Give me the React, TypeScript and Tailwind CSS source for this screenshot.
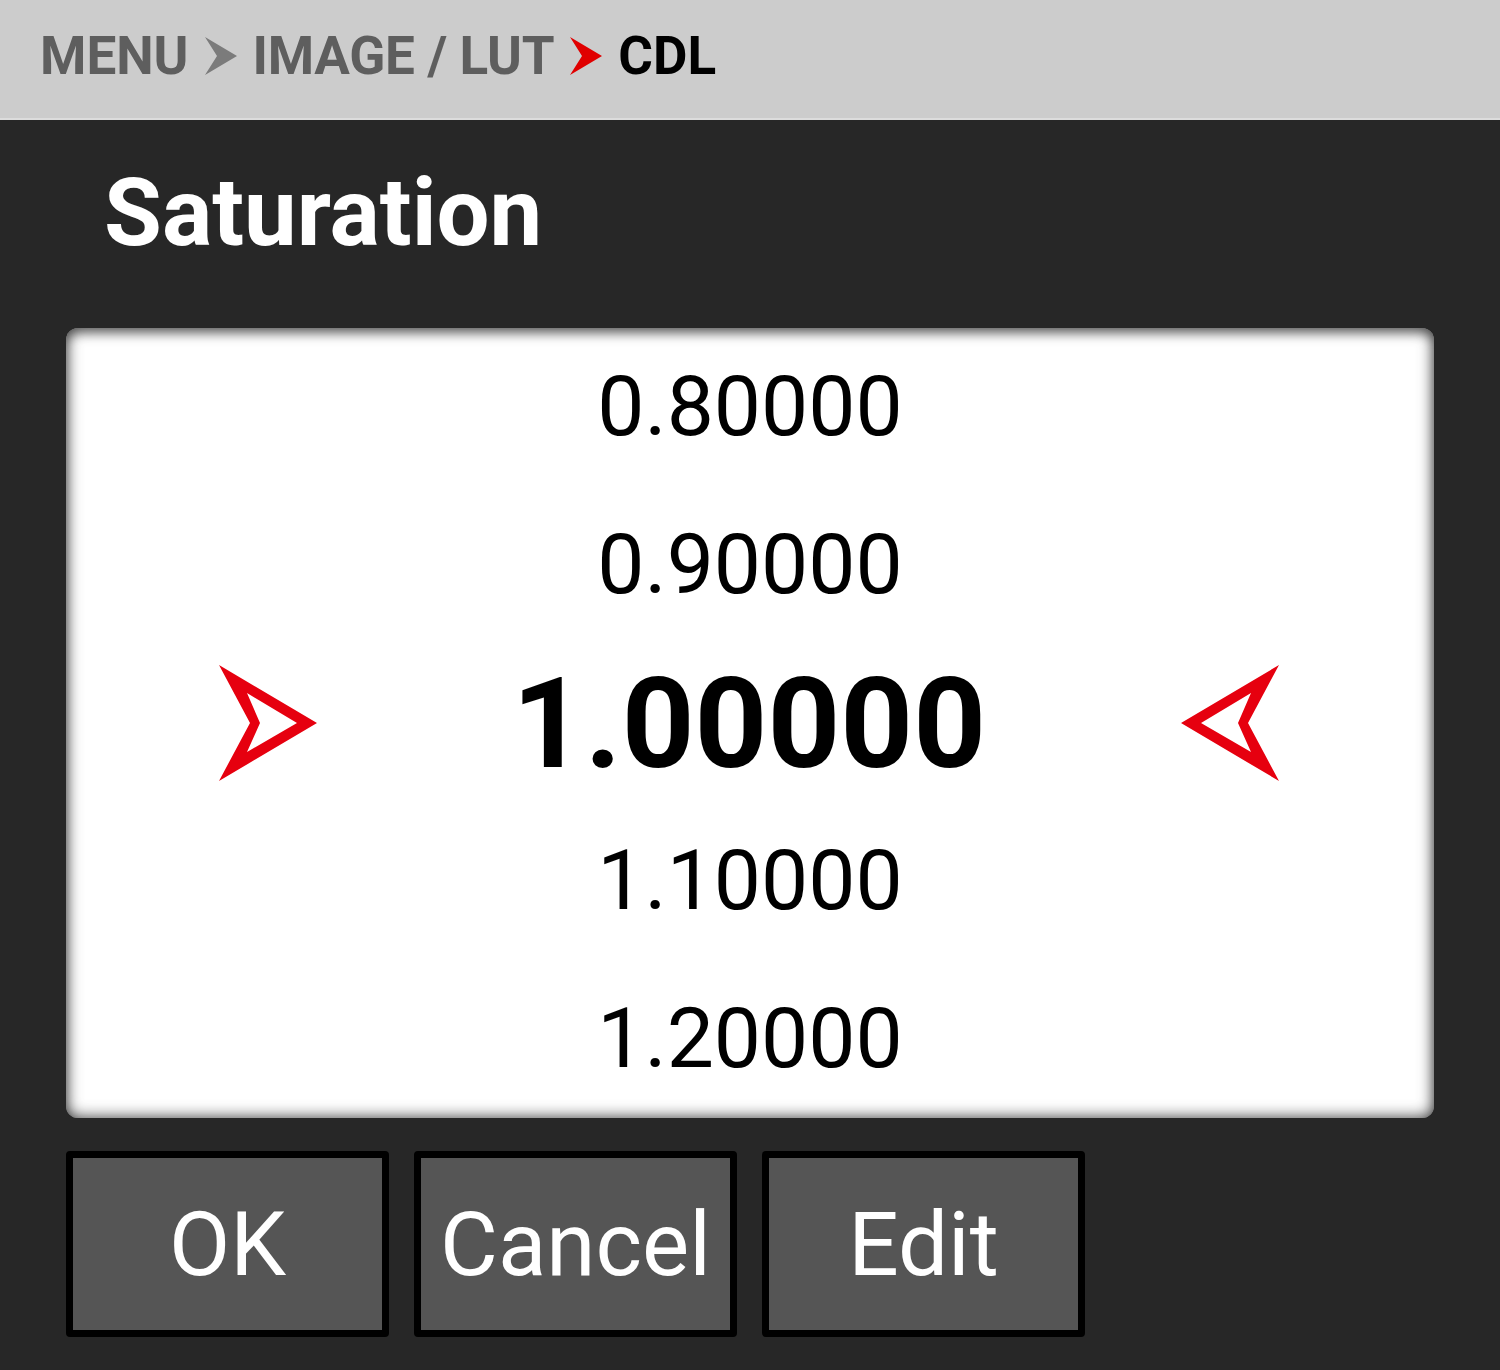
import React from 'react';

const Crumb = ({ color }: { color: string }) => (
    <svg width="32" height="38" viewBox="0 0 32 38" className="shrink-0">
        <path d="M0 0 L32 19 L0 38 L12 19 Z" fill={color} />
    </svg>
);

// hollow red pointer used on both sides of the selected value
const Pointer = ({ flip }: { flip?: boolean }) => (
    <svg width="100" height="118" viewBox="0 0 100 118" className={flip ? '-scale-x-100' : ''}>
        <path
            fillRule="evenodd"
            fill="#e6000f"
            d="M1 1 L99 59 L1 117 L32 59 Z M29 29 L42 59 L29 88 L79 59 Z"
        />
    </svg>
);

const values = ['0.80000', '0.90000', '1.00000', '1.10000', '1.20000'];

const App = () => {
    return (
        <div className="w-[1500px] h-[1370px] bg-[#272727] font-['Roboto',_'Liberation_Sans',_sans-serif] overflow-hidden">
            <div className="h-[120px] bg-[#cccccc] border-b-2 border-[#dcdcdc] flex items-center gap-[16px] pl-[40px] pb-[6px] text-[53px] font-bold leading-none">
                <span className="text-[#5e5e5e]">MENU</span>
                <Crumb color="#7b7b7b" />
                <span className="text-[#5e5e5e] tracking-[-0.3px]">IMAGE / LUT</span>
                <Crumb color="#e00000" />
                <span className="text-black">CDL</span>
            </div>

            <div className="px-[66px]">
                <div className="pl-[38px] pt-[46px] text-white text-[94px] font-bold leading-none">Saturation</div>

                <div className="mt-[68px] h-[790px] rounded-[12px] bg-white shadow-[inset_0_0_16px_rgba(0,0,0,0.8),inset_0_6px_10px_rgba(0,0,0,0.25)] grid grid-rows-5">
                    {values.map((v, i) =>
                        i === 2 ? (
                            <div key={v} className="flex items-center justify-between pl-[152px] pr-[154px]">
                                <Pointer />
                                <span className="text-black text-[127px] font-bold leading-none">{v}</span>
                                <Pointer flip />
                            </div>
                        ) : (
                            <div key={v} className="flex items-center justify-center">
                                <span className="text-black text-[84px] leading-none">{v}</span>
                            </div>
                        )
                    )}
                </div>

                <div className="mt-[33px] flex gap-[25px]">
                    {['OK', 'Cancel', 'Edit'].map((label) => (
                        <button
                            key={label}
                            className="w-[323px] h-[186px] border-[7px] border-black rounded-[4px] bg-[#555555] text-white text-[89px] leading-none flex items-center justify-center"
                        >
                            {label}
                        </button>
                    ))}
                </div>
            </div>
        </div>
    );
};

export default App;
